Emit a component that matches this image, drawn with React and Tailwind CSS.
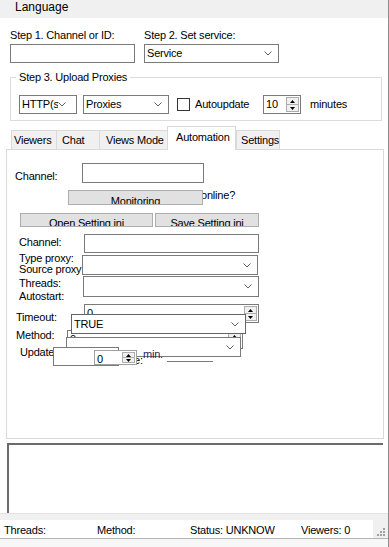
import React from 'react';

const Chevron = () => (
  <svg width="8" height="5" viewBox="0 0 8 5" className="shrink-0">
    <path d="M0.5 0.5 L4 4 L7.5 0.5" fill="none" stroke="#606060" strokeWidth="1" />
  </svg>
);

const Combo = ({ text, className = '', textClass = '' }) => (
  <div className={`flex items-center bg-white border border-[#7a7a7a] pl-[2px] pr-[6px] ${className}`}>
    <span className={`flex-1 min-w-0 overflow-hidden whitespace-nowrap leading-[13px] ${textClass}`}>{text}</span>
    <Chevron />
  </div>
);

const Spin = () => (
  <div className="flex flex-col w-[13px] h-full border border-[#adadad] bg-[#f0f0f0]">
    <div className="flex-1 flex items-center justify-center border-b border-[#adadad]">
      <svg width="5" height="3" viewBox="0 0 5 3"><path d="M0 3 L2.5 0 L5 3Z" fill="#000" /></svg>
    </div>
    <div className="flex-1 flex items-center justify-center">
      <svg width="5" height="3" viewBox="0 0 5 3"><path d="M0 0 L2.5 3 L5 0Z" fill="#000" /></svg>
    </div>
  </div>
);

const Numeric = ({ value, className = '' }) => (
  <div className={`flex bg-white border border-[#7a7a7a] pl-[2px] py-[1px] pr-[1px] ${className}`}>
    <span className="flex-1 leading-[15px]">{value}</span>
    <Spin />
  </div>
);

const Btn = ({ children, className = '' }) => (
  <div className={`bg-[#e1e1e1] border border-[#adadad] overflow-hidden text-center leading-[13px] whitespace-nowrap ${className}`}>
    {children}
  </div>
);

const tabs = [
  { name: 'Viewers', w: 'w-[45px] pl-[2px]' },
  { name: 'Chat', w: 'w-[43px] pl-[5px]' },
  { name: 'Views Mode', w: 'w-[68px] pl-[6px]' },
  { name: 'Automation', w: 'w-[69px] pl-[8px]', active: true },
  { name: 'Settings', w: 'w-[44px] pl-[4px]' },
];

export default function App() {
  return (
    <div className="w-[389px] h-[547px] overflow-hidden bg-white border-r border-[#8c8c8c] text-[11px] tracking-[-0.2px] text-black font-['Liberation_Sans',Arial,sans-serif] flex flex-col">
      {/* Menu */}
      <div className="h-[18px] bg-[#f0f0f0] pl-[15px] pt-[1px] text-[12px] tracking-normal leading-[13px] shrink-0">Language</div>

      {/* Step 1 / Step 2 */}
      <div className="flex mt-[11px] ml-[10px] gap-[9px]">
        <div className="w-[125px]">
          <div className="leading-[13px]">Step 1. Channel or ID:</div>
          <div className="mt-[2px] h-[19px] bg-white border border-[#7a7a7a]" />
        </div>
        <div className="w-[135px]">
          <div className="leading-[13px]">Step 2. Set service:</div>
          <Combo text="Service" className="mt-[2px] h-[19px]" />
        </div>
      </div>

      {/* Step 3 */}
      <fieldset className="mt-[8px] ml-[10px] w-[372px] border border-[#dcdcdc] pt-[11px] pb-[6px]">
        <legend className="ml-[5px] px-[3px] leading-[13px]">Step 3. Upload Proxies</legend>
        <div className="flex items-center ml-[8px] h-[19px]">
          <Combo text="HTTP(s)" className="w-[58px] h-[19px]" textClass="max-w-[36px]" />
          <Combo text="Proxies" className="ml-[6px] w-[86px] h-[19px]" />
          <div className="ml-[8px] w-[13px] h-[13px] border border-[#333333] bg-white" />
          <span className="ml-[5px] w-[68px] leading-[13px]">Autoupdate</span>
          <Numeric value="10" className="w-[38px] h-[19px]" />
          <span className="ml-[9px] leading-[13px]">minutes</span>
        </div>
      </fieldset>

      {/* Tabs */}
      <div className="mt-[5px] ml-[6px] w-[378px]">
        <div className="flex items-end h-[23px] pl-[5px]">
          {tabs.map((t) =>
            t.active ? (
              <div
                key={t.name}
                className={`${t.w} h-[24px] -mb-px relative z-10 bg-white border-x border-t border-[#d9d9d9] pt-[4px] leading-[13px] whitespace-nowrap`}
              >
                {t.name}
              </div>
            ) : (
              <div
                key={t.name}
                className={`${t.w} h-[19px] bg-[#f0f0f0] border-l border-t border-[#d9d9d9] last:border-r pt-[3px] leading-[13px] whitespace-nowrap`}
              >
                {t.name}
              </div>
            )
          )}
        </div>
        <div className="h-[290px] border border-[#d9d9d9] bg-white">
          {/* Channel */}
          <div className="flex pt-[13px] pl-[8px]">
            <span className="w-[67px] mt-[7px] leading-[13px]">Channel:</span>
            <div className="w-[122px] h-[20px] border border-[#7a7a7a] bg-white" />
          </div>

          {/* Monitoring */}
          <div className="flex items-start mt-[7px] pl-[61px]">
            <Btn className="relative z-10 w-[135px] h-[15px] pt-[4px]">Monitoring</Btn>
            <span className="-ml-[2px] -mt-[1px] leading-[13px]">online?</span>
          </div>

          {/* Settings buttons */}
          <div className="flex mt-[8px] pl-[13px] gap-[2px]">
            <Btn className="w-[133px] h-[14px] pt-[3px]">Open Setting ini</Btn>
            <Btn className="w-[104px] h-[14px] pt-[3px]">Save Setting ini</Btn>
          </div>

          {/* Overlapping controls */}
          <div className="relative mt-[7px] h-[140px] leading-[13px]">
            <span className="absolute left-[12px] top-[2px]">Channel:</span>
            <span className="absolute left-[12px] top-[18px]">Type proxy:</span>
            <span className="absolute left-[12px] top-[29px]">Source proxy</span>
            <span className="absolute left-[12px] top-[43px]">Threads:</span>
            <span className="absolute left-[12px] top-[56px]">Autostart:</span>
            <span className="absolute left-[9px] top-[77px]">Timeout:</span>
            <span className="absolute left-[9px] top-[95px]">Method:</span>
            <span className="absolute left-[13px] top-[112px]">Update</span>

            <div className="absolute left-[77px] top-0 w-[175px] h-[19px] border border-[#7a7a7a] bg-white" />
            <Combo text="" className="absolute left-[75px] top-[21px] w-[176px] h-[20px]" />
            <Combo text="" className="absolute left-[76px] top-[42px] w-[176px] h-[21px]" />

            <Numeric value="0" className="absolute left-[77px] top-[70px] w-[175px] h-[19px]" />
            <Numeric value="0" className="absolute left-[60px] top-[96px] w-[176px] h-[19px]" />
            <Combo text="TRUE" className="absolute left-[64px] top-[80px] w-[175px] h-[20px] border-[#646464]" />
            <Combo text="" className="absolute left-[59px] top-[103px] w-[175px] h-[20px]" />

            <span className="absolute left-[113px] top-[120px]">time:</span>
            <div className="absolute left-[46px] top-[113px] w-[66px] h-[19px] border border-[#7a7a7a] bg-white" />
            <Numeric value="0" className="absolute left-[87px] top-[116px] w-[43px] h-[15px] py-0 border-[#a0a0a0]" />

            <span className="absolute left-[136px] top-[114px] text-[#1e1e5a]">min.</span>
            <div className="absolute left-[160px] top-[127px] w-[46px] h-px bg-[#7a7a7a]" />
          </div>
        </div>
      </div>

      {/* Log */}
      <div className="mt-[4px] ml-[7px] w-[376px] h-[70px] bg-white border-t-2 border-l-2 border-[#6b6b6b]" />

      {/* Status */}
      <div className="flex-1 bg-[#f0f0f0] border-t border-[#e3e3e3] flex flex-col">
        <div className="mt-[6px] h-[18px] flex">
          <div className="w-[373px] bg-white relative leading-[13px] pt-[4px]">
            <span className="absolute left-[4px]">Threads:</span>
            <span className="absolute left-[97px]">Method:</span>
            <span className="absolute left-[190px]">Status: UNKNOW</span>
            <span className="absolute left-[301px]">Viewers: 0</span>
          </div>
          <div className="flex-1 flex items-end justify-center pb-[2px]">
            <svg width="9" height="9" viewBox="0 0 9 9">
              <rect x="7" y="1" width="2" height="2" fill="#a0a0a0" />
              <rect x="4" y="4" width="2" height="2" fill="#a0a0a0" />
              <rect x="7" y="4" width="2" height="2" fill="#a0a0a0" />
              <rect x="1" y="7" width="2" height="2" fill="#a0a0a0" />
              <rect x="4" y="7" width="2" height="2" fill="#a0a0a0" />
              <rect x="7" y="7" width="2" height="2" fill="#a0a0a0" />
            </svg>
          </div>
        </div>
        <div className="h-px bg-[#b4b4b4]" />
        <div className="flex-1 bg-[#f7f7f7]" />
      </div>
    </div>
  );
}
